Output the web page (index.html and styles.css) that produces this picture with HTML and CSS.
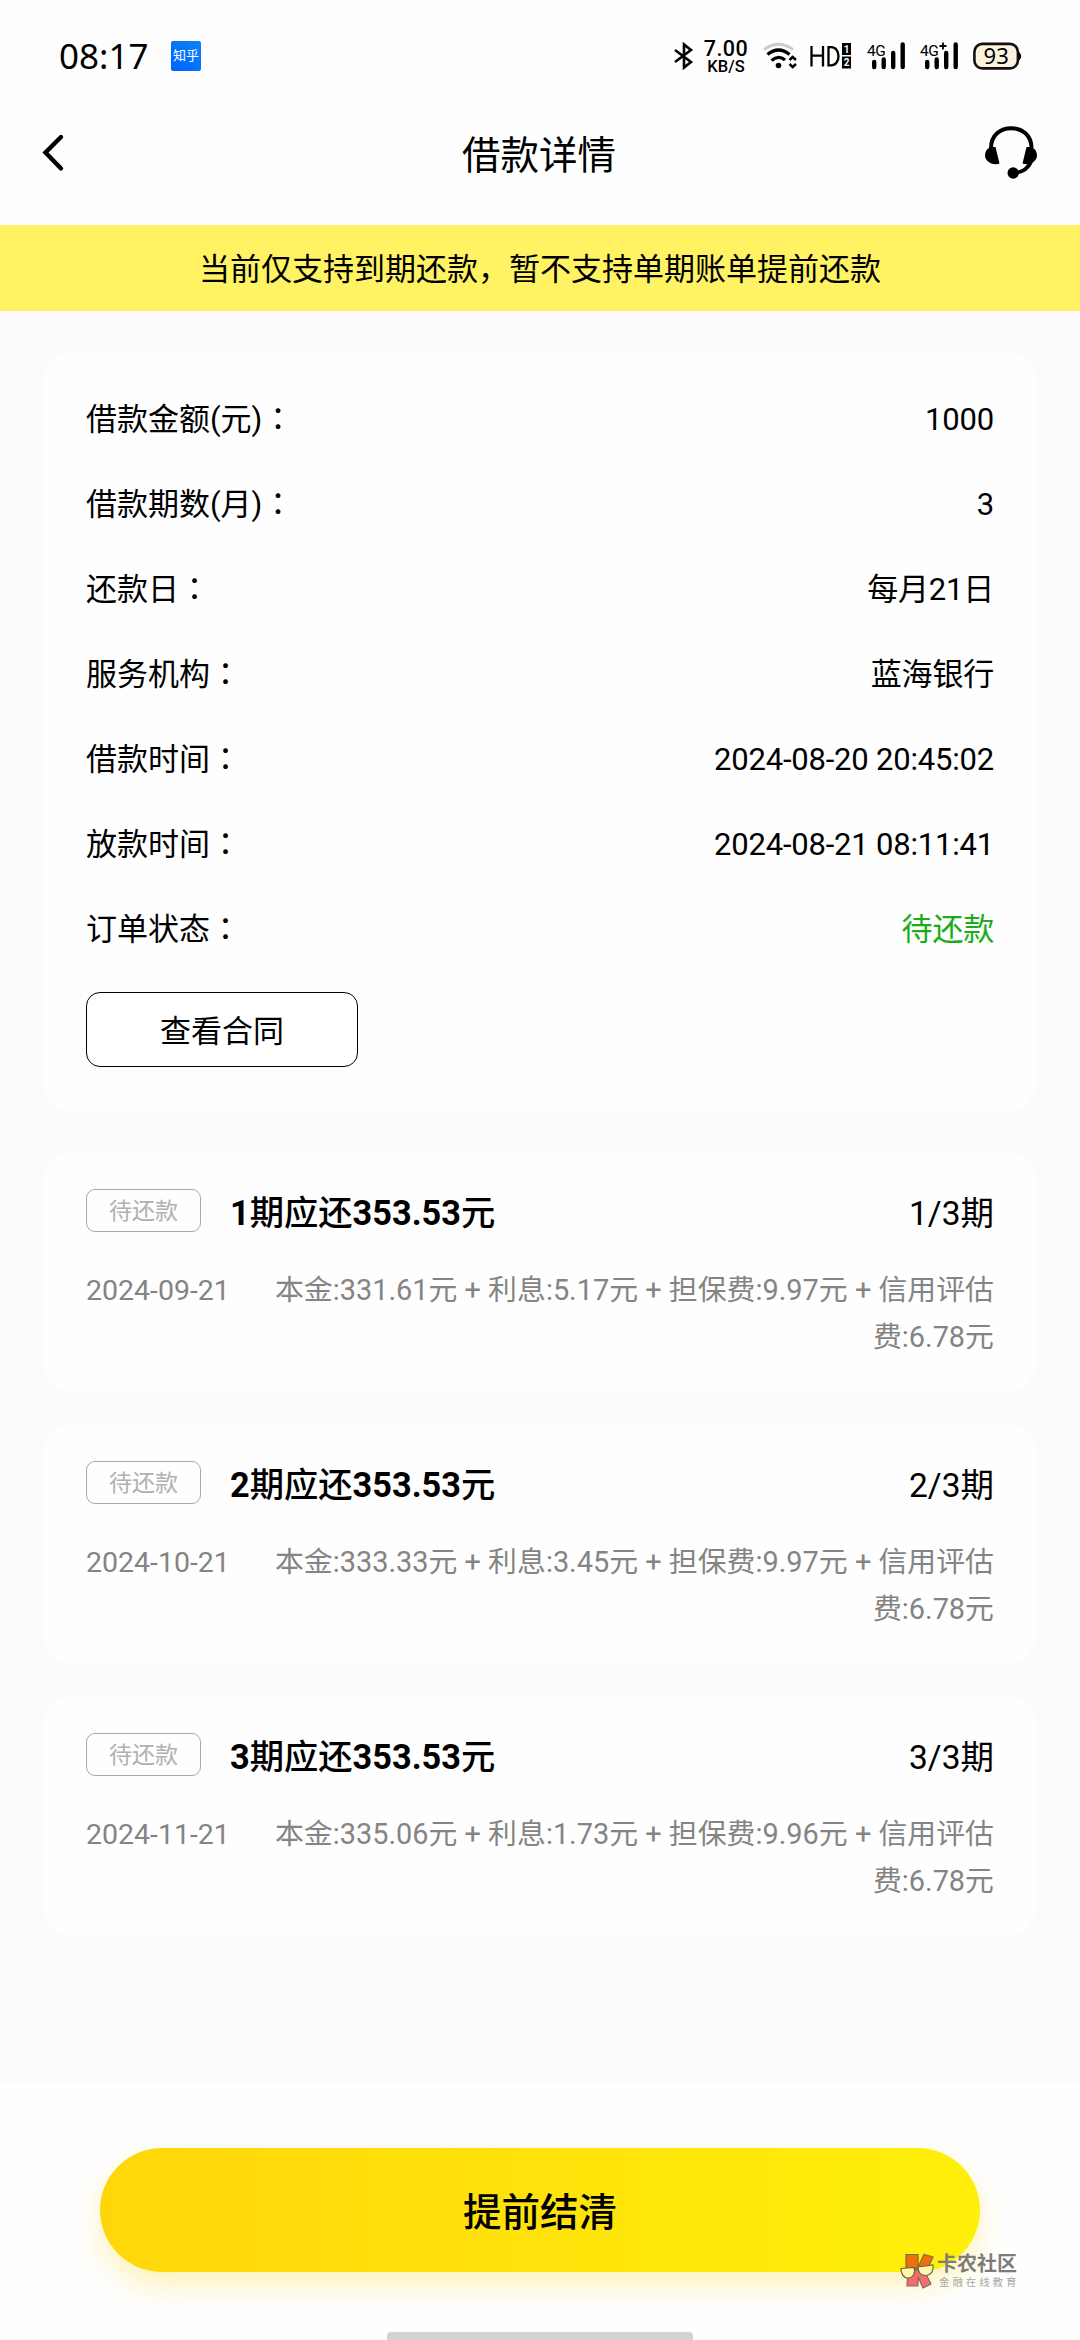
FILE: index.html
```html
<!DOCTYPE html>
<html lang="zh-CN">
<head>
    <meta charset="UTF-8">
    <meta name="viewport" content="width=device-width, initial-scale=1.0">
    <title>借款详情</title>
    <link rel="stylesheet" href="styles.css">
</head>
<body>
    <div class="status-bar">
        <span class="time">08:17</span>
        <span class="app-icon">知乎</span>
        <svg class="icon-bt" width="20" height="28" viewBox="0 0 20 28">
            <path d="M1 8L17 20L10 25.500V2.500L17 8L1 20" fill="none" stroke="#000" stroke-width="2.600"/>
        </svg>
        <div class="speed">
            <span class="speed-num">7.00</span>
            <span class="speed-unit">KB/S</span>
        </div>
        <svg class="icon-wifi" width="34" height="28" viewBox="0 0 34 28">
            <path d="M1 7.500Q15.500 -3 30 7.500" fill="none" stroke="#ccc" stroke-width="2.800"/>
            <path d="M4.500 12.500Q15.500 3.500 26.500 12.500M8.500 18.500Q15.500 12.500 22 18" fill="none" stroke="#000" stroke-width="3.200"/>
            <circle cx="15.500" cy="23.500" r="2.800"/>
            <path d="M26.500 18L29.700 15L33 18M26.500 22L29.700 25L33 22" fill="none" stroke="#000" stroke-width="2.400"/>
        </svg>
        <svg class="icon-hd" width="42" height="28" viewBox="0 0 42 28">
            <path d="M1.500 4V24.500M13 4V24.500M1.500 13.700H13M18.500 5.200V23.300H21C31 23.300 31 5.200 21 5.200Z" fill="none" stroke="#000" stroke-width="2.300"/>
            <rect x="32" y="1" width="9" height="12"/>
            <rect x="32" y="14.500" width="9" height="12"/>
            <text class="sim" x="36.500" y="10.500">1</text>
            <text class="sim" x="36.500" y="24">2</text>
        </svg>
        <svg class="icon-signal" width="40" height="28" viewBox="0 0 40 28">
            <text class="net" x="0" y="13.500">4G</text>
            <path d="M7.200 20V25M16.700 17.500V25M26.200 11V25M35.700 2.500V25" stroke="#000" stroke-width="4.400" stroke-linecap="round"/>
        </svg>
        <svg class="icon-signal2" width="40" height="28" viewBox="0 0 40 28">
            <text class="net" x="0" y="13.500">4G</text>
            <path d="M19.500 4H26.500M23 0.500V7.500" stroke="#000" stroke-width="1.800"/>
            <path d="M7.200 20V25M16.700 17.500V25M26.200 11V25M35.700 2.500V25" stroke="#000" stroke-width="4.400" stroke-linecap="round"/>
        </svg>
        <svg class="icon-battery" width="50" height="28" viewBox="0 0 50 28">
            <rect x="1.400" y="1.900" width="43.500" height="24.500" rx="8" fill="#fdf3dc" stroke="#111" stroke-width="2.600"/>
            <path d="M46 10.500Q49.500 14 46 18Z" stroke="#000"/>
            <text class="power" x="23.200" y="21.800">93</text>
        </svg>
    </div>

    <div class="header">
        <svg class="back" width="24" height="40" viewBox="0 0 24 40">
            <path d="M20 4L4.500 19.500L20 35.500" fill="none" stroke="#000" stroke-width="4.400" stroke-linecap="round"/>
        </svg>
        <h1>借款详情</h1>
        <svg class="service" width="52" height="53" viewBox="0 0 52 53">
            <path d="M6 22C6 -4.500 46.500 -4.500 46.500 22" fill="none" stroke="#000" stroke-width="4"/>
            <path d="M4 21H10.500L14.500 37.500C9 39.500 1 37 0 30C0 26 1.500 23.500 4 22Z"/>
            <path d="M48 21H41.500L37.500 37.500C43 39.500 51 37 52 30C52 26 50.500 23.500 48 22Z"/>
            <path d="M46.500 35C43 43 37 46.500 29 47" fill="none" stroke="#000" stroke-width="3.800"/>
            <circle cx="28.200" cy="47" r="5.700"/>
        </svg>
    </div>

    <div class="notice">当前仅支持到期还款，暂不支持单期账单提前还款</div>

    <div class="content">
        <div class="card info">
            <div class="row"><span>借款金额(元)<i lang="zh-TW">：</i></span><span class="value">1000</span></div>
            <div class="row"><span>借款期数(月)<i lang="zh-TW">：</i></span><span class="value">3</span></div>
            <div class="row"><span>还款日<i lang="zh-TW">：</i></span><span class="value">每月21日</span></div>
            <div class="row"><span>服务机构<i lang="zh-TW">：</i></span><span class="value">蓝海银行</span></div>
            <div class="row"><span>借款时间<i lang="zh-TW">：</i></span><span class="value">2024-08-20 20:45:02</span></div>
            <div class="row"><span>放款时间<i lang="zh-TW">：</i></span><span class="value">2024-08-21 08:11:41</span></div>
            <div class="row"><span>订单状态<i lang="zh-TW">：</i></span><span class="value pending">待还款</span></div>
            <button class="contract">查看合同</button>
        </div>

        <div class="card bill">
            <div class="bill-head">
                <span class="tag">待还款</span>
                <span class="amount"><b>1</b>期应还<b>353.53</b>元</span>
                <span class="period">1/3期</span>
            </div>
            <div class="bill-body">
                <span class="date">2024-09-21</span>
                <p>本金:331.61元 + 利息:5.17元 + 担保费:9.97元 + 信用评估费:6.78元</p>
            </div>
        </div>

        <div class="card bill">
            <div class="bill-head">
                <span class="tag">待还款</span>
                <span class="amount"><b>2</b>期应还<b>353.53</b>元</span>
                <span class="period">2/3期</span>
            </div>
            <div class="bill-body">
                <span class="date">2024-10-21</span>
                <p>本金:333.33元 + 利息:3.45元 + 担保费:9.97元 + 信用评估费:6.78元</p>
            </div>
        </div>

        <div class="card bill">
            <div class="bill-head">
                <span class="tag">待还款</span>
                <span class="amount"><b>3</b>期应还<b>353.53</b>元</span>
                <span class="period">3/3期</span>
            </div>
            <div class="bill-body">
                <span class="date">2024-11-21</span>
                <p>本金:335.06元 + 利息:1.73元 + 担保费:9.96元 + 信用评估费:6.78元</p>
            </div>
        </div>
    </div>

    <div class="footer">
        <button class="settle">提前结清</button>
        <div class="home-bar"></div>
        <div class="watermark">
            <svg width="36" height="36" viewBox="0 0 36 36">
                <path d="M6 1.500H18V14L24 1.500L33 4L27 17H6Z" fill="#f0700f" stroke="#8a6a3a" stroke-width="1.200"/>
                <path d="M8 17H24L31 31L23 35L18 24V33H7Z" fill="#f26d72" stroke="#8a6a5a" stroke-width="1.200"/>
                <path d="M1 15.500L14 14.500C16 20 13 25 8 25C3 25 1 20 1 15.500ZM18 14L33 12C34 18 31 22 26 22.500C21 22.500 18 19 18 14Z" fill="#fff6a8" stroke="#6f6440" stroke-width="1.200"/>
                <path d="M14 15.500L18 15" stroke="#6f6440" stroke-width="1.500"/>
            </svg>
            <div class="mark-text">
                <span class="mark-name">卡农社区</span>
                <span class="mark-sub">金融在线教育</span>
            </div>
        </div>
    </div>
</body>
</html>
```

FILE: styles.css
```css
* {
    box-sizing: border-box;
}
body {
    margin: 0;
    width: 1080px;
    height: 2340px;
    display: flex;
    flex-direction: column;
    overflow: hidden;
    background: #fefefe;
    color: #000;
    font-family: Roboto, "Noto Sans CJK SC", sans-serif;
    font-size: 31px;
}
svg {
    display: block;
    flex: none;
    overflow: visible;
}
button {
    font-family: inherit;
    color: #000;
    padding: 0;
}
/* Barra de estado */
.status-bar {
    height: 112px;
    display: flex;
    align-items: center;
    padding-left: 59px;
}
.time {
    width: 112px;
    font-family: "Noto Sans", sans-serif;
    font-size: 35px;
    line-height: 40px;
}
.app-icon {
    width: 30px;
    height: 30px;
    margin-right: 473px;
    border-radius: 2px;
    background: linear-gradient(45deg, #0062ff, #0a84f5);
    color: #fff;
    font-size: 13px;
    line-height: 30px;
    text-align: center;
}
.speed {
    width: 46px;
    margin: 1px 0 0 9px;
    display: flex;
    flex-direction: column;
    align-items: center;
    font-weight: 500;
}
.speed-num {
    font-size: 21.500px;
    line-height: 19px;
    letter-spacing: 0.5px;
}
.speed-unit {
    font-size: 16.500px;
    line-height: 17px;
}
.icon-wifi {
    margin-left: 14px;
}
.icon-hd {
    margin-left: 13px;
}
.icon-signal {
    margin-left: 15px;
}
.icon-signal2 {
    margin-left: 13px;
}
.icon-battery {
    margin-left: 13px;
}
.sim {
    font-size: 10px;
    font-weight: 700;
    fill: #fff;
    text-anchor: middle;
}
.net {
    font-size: 15.500px;
    letter-spacing: -0.5px;
}
.power {
    font-family: "Noto Sans", sans-serif;
    font-size: 22px;
    text-anchor: middle;
}
/* Cabecera */
.header {
    height: 113px;
    display: flex;
    justify-content: space-between;
    align-items: flex-start;
    padding: 14px 43px 0 39px;
}
.back {
    margin: 7px 28px 0 2px;
}
.header h1 {
    margin: 2px 0 0;
    font-size: 38.500px;
    font-weight: 400;
    line-height: 56px;
}
.notice {
    height: 86px;
    background: #fff364;
    line-height: 90px;
    text-align: center;
}
.content {
    height: 1771px;
    padding: 42px 43px 0;
    background: #fbfbfb;
}
.card {
    border-radius: 29px;
    background: #fefefe;
    padding: 0 43px;
}
/* Datos del préstamo */
.info {
    height: 758px;
    padding-top: 24px;
    margin-bottom: 42px;
}
.row {
    height: 85px;
    display: flex;
    justify-content: space-between;
    line-height: 85px;
}
.row i {
    font-family: "Noto Sans CJK TC", sans-serif;
    font-style: normal;
    line-height: 0;
}
.value {
    letter-spacing: -0.2px;
}
.pending {
    color: #1aad19;
}
.contract {
    display: block;
    width: 272px;
    height: 75px;
    margin-top: 20px;
    padding-bottom: 3px;
    border: 1px solid #000;
    border-radius: 14px;
    background: #fff;
    font-size: 31px;
}
/* Cuotas */
.bill {
    height: 238px;
    margin-bottom: 34px;
    padding-top: 35px;
}
.bill-head {
    height: 44px;
    display: flex;
    align-items: center;
    font-size: 33.500px;
}
.tag {
    width: 115px;
    height: 43px;
    margin-right: 29px;
    border: 1px solid #aaa;
    border-radius: 9px;
    color: #b0b0b0;
    font-size: 23px;
    line-height: 43px;
    text-align: center;
}
.amount {
    font-size: 34.300px;
    font-weight: 500;
}
.amount b {
    font-weight: 700;
}
.period {
    margin-left: auto;
}
.bill-body {
    display: flex;
    justify-content: space-between;
    margin-top: 35px;
    color: #848484;
    font-size: 28.900px;
    line-height: 47px;
}
.date {
    font-size: 28.500px;
}
.bill-body p {
    width: 730px;
    margin: 0;
    text-align: right;
}
/* Pie con el botón principal */
.footer {
    position: relative;
    flex: 1;
    display: flex;
    flex-direction: column;
    align-items: center;
    justify-content: space-between;
    padding-top: 66px;
}
.settle {
    width: 880px;
    height: 124px;
    padding-bottom: 3px;
    border: none;
    border-radius: 62px;
    background: linear-gradient(90deg, #ffd60a, #ffef0a);
    box-shadow: 0 14px 28px rgba(255, 214, 10, 0.28);
    font-size: 38.500px;
    font-weight: 500;
}
.home-bar {
    width: 306px;
    height: 8px;
    border-radius: 4px 4px 0 0;
    background: #d3d3d3;
}
/* Marca de agua encima del botón */
.watermark {
    position: absolute;
    left: 900px;
    top: 171px;
    display: flex;
}
.mark-text {
    display: flex;
    flex-direction: column;
    margin-left: 1px;
    white-space: nowrap;
}
.mark-name {
    color: #7d7d78;
    font-size: 20px;
    font-weight: 700;
    line-height: 22px;
}
.mark-sub {
    margin-left: 2px;
    color: #a8a8a4;
    font-size: 10.500px;
    line-height: 15px;
    letter-spacing: 2.900px;
}
```
